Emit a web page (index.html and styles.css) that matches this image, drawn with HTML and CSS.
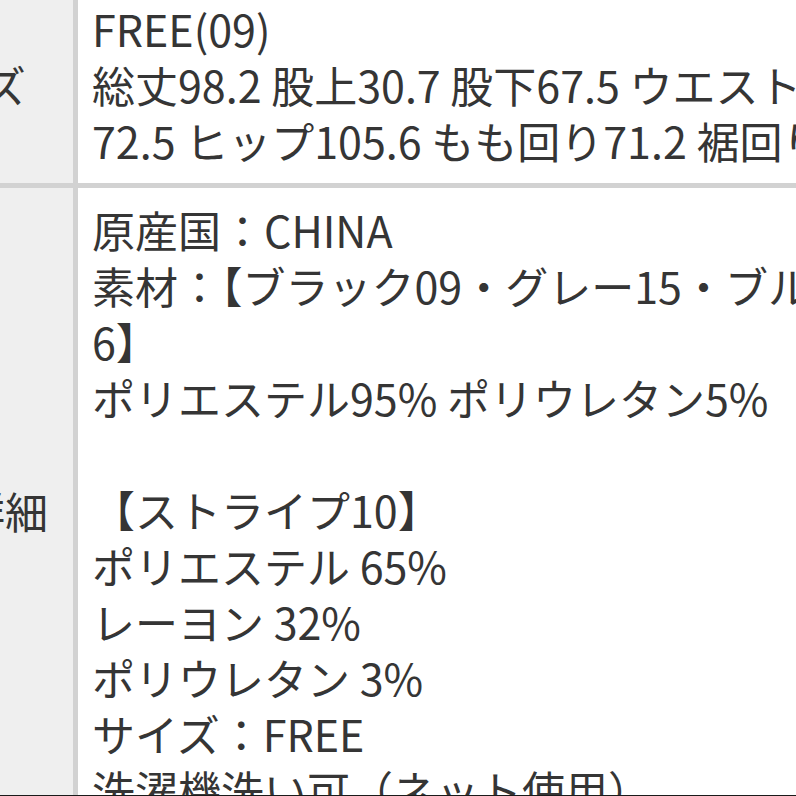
FILE: index.html
```html
<!DOCTYPE html>
<html lang="ja">
<head>
<meta charset="utf-8">
<title>商品情報</title>
<link rel="stylesheet" href="styles.css">
</head>
<body>
<div class="viewport">
  <div class="spec">
    <div class="th">サイズ</div>
    <div class="td td-size">
      <div class="line">FREE(09)</div>
      <div class="line">総丈98.2 股上30.7 股下67.5 ウエスト</div>
      <div class="line">72.5 ヒップ105.6 もも回り71.2 裾回り</div>
    </div>
    <div class="th">商品詳細</div>
    <div class="td td-detail">
      <div class="line">原産国：CHINA</div>
      <div class="line">素材：【ブラック09・グレー15・ブルー1</div>
      <div class="line">6】</div>
      <div class="line">ポリエステル95% ポリウレタン5%</div>
      <div class="line">&nbsp;</div>
      <div class="line">【ストライプ10】</div>
      <div class="line">ポリエステル 65%</div>
      <div class="line">レーヨン 32%</div>
      <div class="line">ポリウレタン 3%</div>
      <div class="line">サイズ：FREE</div>
      <div class="line">洗濯機洗い可（ネット使用）</div>
    </div>
  </div>
</div>
</body>
</html>
```

FILE: styles.css
```css
html, body {
  margin: 0;
  padding: 0;
  background: #ffffff;
}

body {
  overflow: hidden;
  font-family: "Noto Sans CJK JP", "Noto Sans", sans-serif;
  color: #353535;
}

.viewport {
  height: 795px;
  overflow: hidden;
  border-bottom: 1px solid #1a1a1a;
}

.spec {
  display: grid;
  grid-template-columns: 222px 1200px;
  gap: 5px;
  background: #d2d2d2;
  margin-left: -149px;
  margin-top: -16px;
  width: max-content;
}

.th {
  background: #efefef;
  display: flex;
  align-items: center;
  justify-content: center;
  font-size: 43px;
  line-height: 56px;
}

.td {
  background: #ffffff;
  padding: 16px 14px 14px 14px;
  font-size: 43px;
  line-height: 56px;
}

.td-size {
  padding-bottom: 15px;
}

.td-detail {
  padding-top: 13px;
}

.line {
  white-space: nowrap;
}
```
